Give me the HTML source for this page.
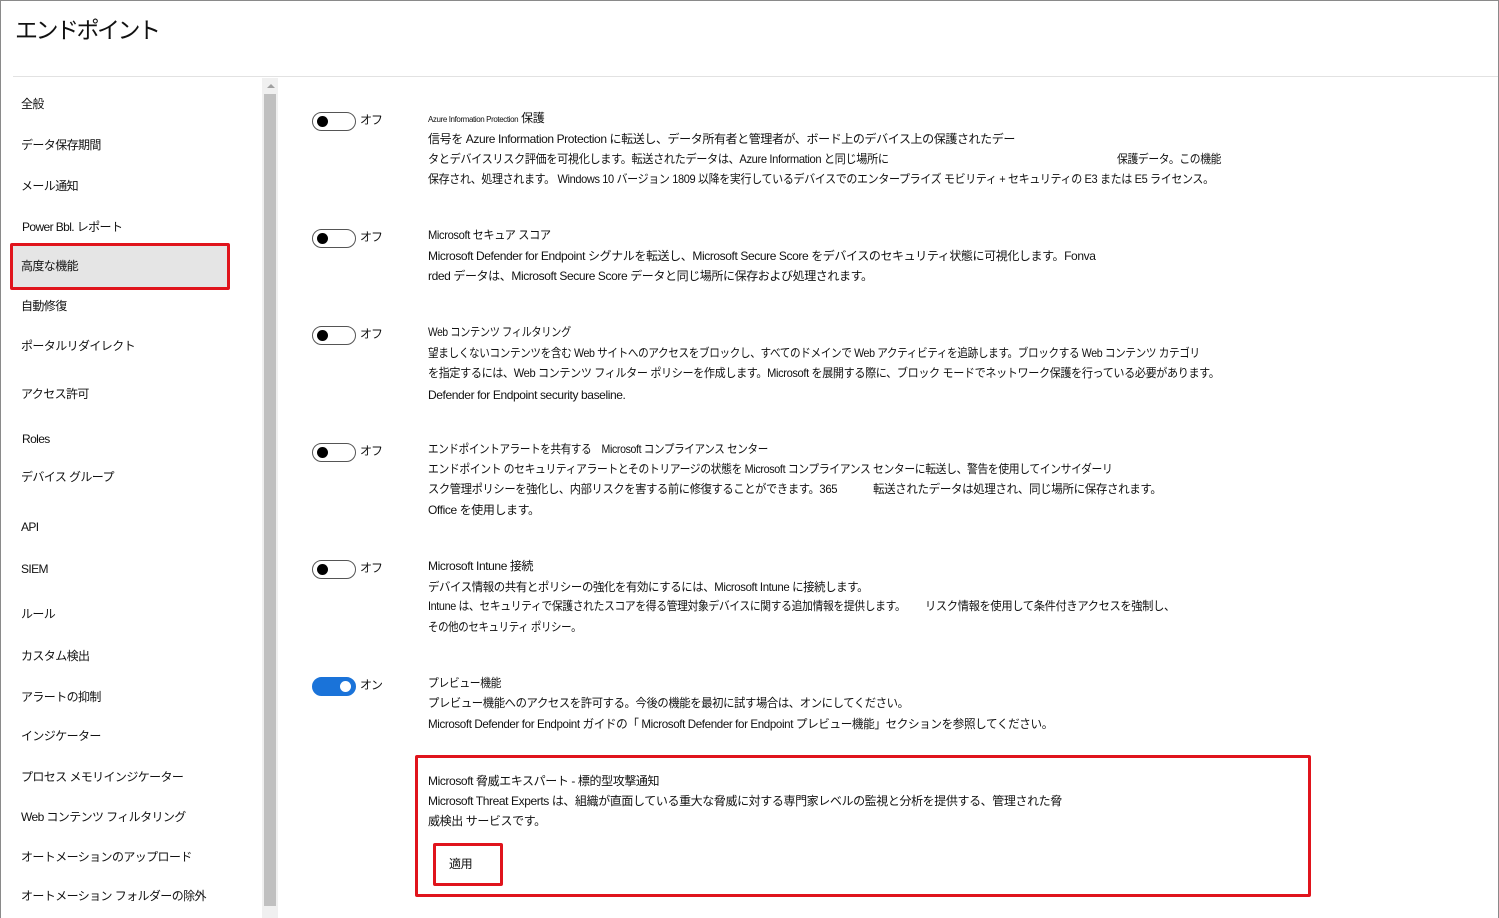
<!DOCTYPE html>
<html><head><meta charset="utf-8"><style>
*{margin:0;padding:0;box-sizing:border-box}
body{width:1499px;height:918px;background:#fff;position:relative;overflow:hidden;font-family:"Liberation Sans","Noto Sans CJK JP",sans-serif;color:#111}
.frame{position:absolute;left:0;top:0;width:1499px;height:918px;border:1px solid #8a8a8a;border-bottom:none}
.t{position:absolute;white-space:nowrap;font-size:12px;line-height:16px;letter-spacing:-0.4px;transform-origin:left center}
.s{position:absolute;white-space:nowrap;font-size:12px;line-height:16px;left:21px;letter-spacing:-0.6px}
.tg{position:absolute;left:312px;width:44px;height:19px;border:1px solid #555;border-radius:10px;background:#fff}
.tg::after{content:"";position:absolute;left:4px;top:3px;width:11px;height:11px;border-radius:50%;background:#000}
.tg.on{background:#1a73d9;border-color:#1a73d9}
.tg.on::after{left:auto;right:4px;background:#fff}
.lb{position:absolute;left:360px;font-size:12px;line-height:16px;letter-spacing:-1px}
</style></head><body>
<div class="frame"></div>
<div style="position:absolute;left:15px;top:14px;font-size:23px;line-height:32px;letter-spacing:-2.5px">エンドポイント</div>
<div style="position:absolute;left:13px;top:76px;width:1485px;height:1px;background:#e2e2e2"></div>
<div style="position:absolute;left:262px;top:78px;width:16px;height:840px;background:#f0f0f0"></div>
<div style="position:absolute;left:264px;top:94px;width:12px;height:812px;background:#c0c0c0"></div>
<div style="position:absolute;left:267px;top:84px;width:0;height:0;border-left:4px solid transparent;border-right:4px solid transparent;border-bottom:4px solid #a0a0a0"></div>

<div class="s" style="top:96px">全般</div>
<div class="s" style="top:137px">データ保存期間</div>
<div class="s" style="top:178px">メール通知</div>
<div class="s" style="top:219px;left:22px">Power Bbl. レポート</div>
<div style="position:absolute;left:10px;top:243px;width:220px;height:47px;background:#e5e5e5;border:3px solid #e0141c;border-radius:2px"></div>
<div class="s" style="top:258px">高度な機能</div>
<div class="s" style="top:298px">自動修復</div>
<div class="s" style="top:338px">ポータルリダイレクト</div>
<div class="s" style="top:386px">アクセス許可</div>
<div class="s" style="top:431px;left:22px">Roles</div>
<div class="s" style="top:469px">デバイス グループ</div>
<div class="s" style="top:519px">API</div>
<div class="s" style="top:561px">SIEM</div>
<div class="s" style="top:606px">ルール</div>
<div class="s" style="top:648px">カスタム検出</div>
<div class="s" style="top:689px">アラートの抑制</div>
<div class="s" style="top:728px">インジケーター</div>
<div class="s" style="top:769px">プロセス メモリインジケーター</div>
<div class="s" style="top:809px">Web コンテンツ フィルタリング</div>
<div class="s" style="top:849px">オートメーションのアップロード</div>
<div class="s" style="top:888px">オートメーション フォルダーの除外</div>

<div class="tg" style="top:112px"></div><div class="lb" style="top:112px">オフ</div>
<div class="t" style="left:428px;top:110px"><span style="font-size:8px">Azure Information Protection</span> 保護</div>
<div class="t" style="left:428px;top:131px">信号を Azure Information Protection に転送し、データ所有者と管理者が、ボード上のデバイス上の保護されたデー</div>
<div class="t" style="left:428px;top:151px;transform:scaleX(0.93)">タとデバイスリスク評価を可視化します。転送されたデータは、Azure Information と同じ場所に</div>
<div class="t" style="left:1117px;top:151px;transform:scaleX(0.9)">保護データ。この機能</div>
<div class="t" style="left:428px;top:171px;transform:scaleX(0.918)">保存され、処理されます。 Windows 10 バージョン 1809 以降を実行しているデバイスでのエンタープライズ モビリティ + セキュリティの E3 または E5 ライセンス。</div>

<div class="tg" style="top:229px"></div><div class="lb" style="top:229px">オフ</div>
<div class="t" style="left:428px;top:227px;transform:scaleX(0.93)">Microsoft セキュア スコア</div>
<div class="t" style="left:428px;top:248px">Microsoft Defender for Endpoint シグナルを転送し、Microsoft Secure Score をデバイスのセキュリティ状態に可視化します。Fonva</div>
<div class="t" style="left:428px;top:268px">rded データは、Microsoft Secure Score データと同じ場所に保存および処理されます。</div>

<div class="tg" style="top:326px"></div><div class="lb" style="top:326px">オフ</div>
<div class="t" style="left:428px;top:324px;transform:scaleX(0.85)">Web コンテンツ フィルタリング</div>
<div class="t" style="left:428px;top:345px;transform:scaleX(0.883)">望ましくないコンテンツを含む Web サイトへのアクセスをブロックし、すべてのドメインで Web アクティビティを追跡します。ブロックする Web コンテンツ カテゴリ</div>
<div class="t" style="left:428px;top:365px;transform:scaleX(0.924)">を指定するには、Web コンテンツ フィルター ポリシーを作成します。Microsoft を展開する際に、ブロック モードでネットワーク保護を行っている必要があります。</div>
<div class="t" style="left:428px;top:387px">Defender for Endpoint security baseline.</div>

<div class="tg" style="top:443px"></div><div class="lb" style="top:443px">オフ</div>
<div class="t" style="left:428px;top:441px;transform:scaleX(0.88)">エンドポイントアラートを共有する　Microsoft コンプライアンス センター</div>
<div class="t" style="left:428px;top:461px;transform:scaleX(0.9)">エンドポイント のセキュリティアラートとそのトリアージの状態を Microsoft コンプライアンス センターに転送し、警告を使用してインサイダーリ</div>
<div class="t" style="left:428px;top:481px;transform:scaleX(0.94)">スク管理ポリシーを強化し、内部リスクを害する前に修復することができます。365</div>
<div class="t" style="left:873px;top:481px;transform:scaleX(0.96)">転送されたデータは処理され、同じ場所に保存されます。</div>
<div class="t" style="left:428px;top:502px">Office を使用します。</div>

<div class="tg" style="top:560px"></div><div class="lb" style="top:560px">オフ</div>
<div class="t" style="left:428px;top:558px">Microsoft Intune 接続</div>
<div class="t" style="left:428px;top:579px;transform:scaleX(0.95)">デバイス情報の共有とポリシーの強化を有効にするには、Microsoft Intune に接続します。</div>
<div class="t" style="left:428px;top:598px;transform:scaleX(0.9)">Intune は、セキュリティで保護されたスコアを得る管理対象デバイスに関する追加情報を提供します。</div>
<div class="t" style="left:925px;top:598px;transform:scaleX(0.94)">リスク情報を使用して条件付きアクセスを強制し、</div>
<div class="t" style="left:428px;top:619px;transform:scaleX(0.87)">その他のセキュリティ ポリシー。</div>

<div class="tg on" style="top:677px"></div><div class="lb" style="top:677px">オン</div>
<div class="t" style="left:428px;top:675px;transform:scaleX(0.9)">プレビュー機能</div>
<div class="t" style="left:428px;top:695px;transform:scaleX(0.944)">プレビュー機能へのアクセスを許可する。今後の機能を最初に試す場合は、オンにしてください。</div>
<div class="t" style="left:428px;top:716px;transform:scaleX(0.966)">Microsoft Defender for Endpoint ガイドの「 Microsoft Defender for Endpoint プレビュー機能」セクションを参照してください。</div>

<div style="position:absolute;left:415px;top:755px;width:896px;height:142px;border:3px solid #e0141c;border-radius:2px"></div>
<div class="t" style="left:428px;top:773px">Microsoft 脅威エキスパート - 標的型攻撃通知</div>
<div class="t" style="left:428px;top:793px">Microsoft Threat Experts は、組織が直面している重大な脅威に対する専門家レベルの監視と分析を提供する、管理された脅</div>
<div class="t" style="left:428px;top:813px">威検出 サービスです。</div>
<div style="position:absolute;left:433px;top:843px;width:70px;height:43px;border:3px solid #e0141c;border-radius:2px"></div>
<div class="t" style="left:449px;top:856px">適用</div>
</body></html>
